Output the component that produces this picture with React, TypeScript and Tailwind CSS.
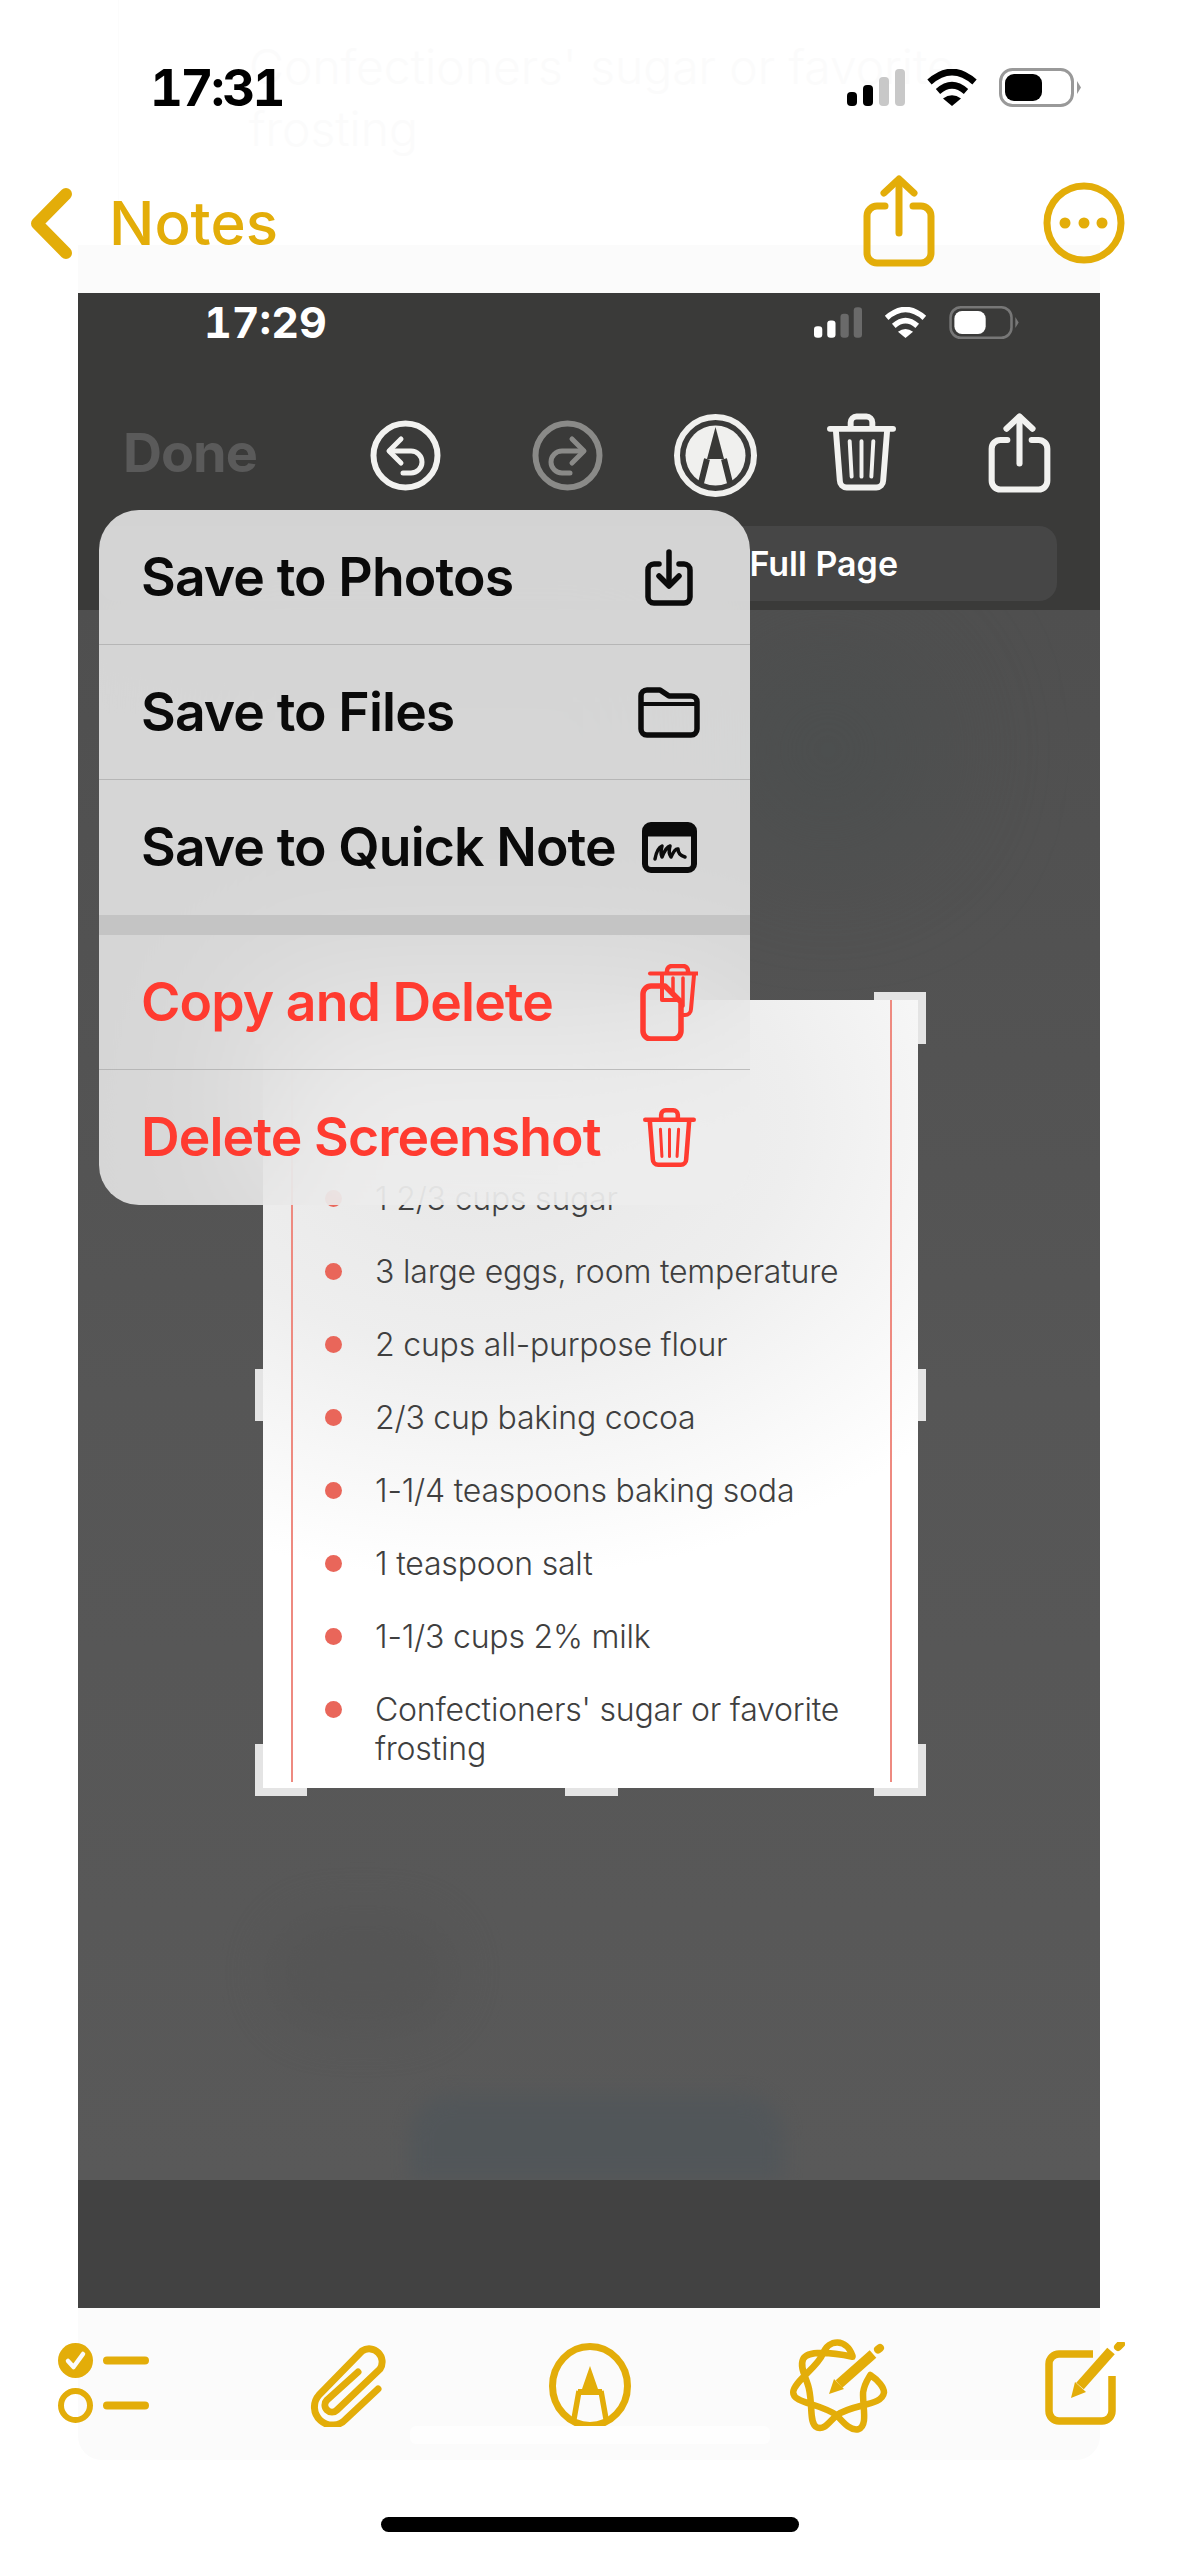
const GOLD = 'text-[#e3ad09]';

function Signal({ className, dim, width, height }: { className: string; dim: string; width: number; height: number }) {
  return (
    <svg width={width} height={height} viewBox="0 0 58 37" className={className}>
      <rect x="0" y="23" width="10" height="14" rx="4" fill="currentColor" />
      <rect x="16" y="16" width="10" height="21" rx="4" fill="currentColor" />
      <rect x="32" y="8" width="10" height="29" rx="4" fill={dim} />
      <rect x="48" y="0" width="10" height="37" rx="4" fill={dim} />
    </svg>
  );
}

function Wifi({ className, width, height }: { className: string; width: number; height: number }) {
  return (
    <svg width={width} height={height} viewBox="0 0 50 37" className={className} fill="none" stroke="currentColor" strokeWidth="6.5">
      <path d="M2.5 13Q25-7 47.500 13" />
      <path d="M11 22.500Q25 10 39 22.500" />
      <path d="M25 37 16 29.500Q25 23 34 29.500Z" fill="currentColor" stroke="none" />
    </svg>
  );
}

function Battery({ className, frame, width, height }: { className: string; frame: string; width: number; height: number }) {
  return (
    <svg width={width} height={height} viewBox="0 0 82 39" className={className}>
      <rect x="1.500" y="1.500" width="72" height="36" rx="12" fill="none" stroke={frame} strokeWidth="3" />
      <rect x="6" y="6" width="37" height="27" rx="9" fill="currentColor" />
      <path d="M78 13 82 19.500 78 26Z" fill={frame} />
    </svg>
  );
}

function ShareIcon({ className, width, height }: { className: string; width: number; height: number }) {
  return (
    <svg width={width} height={height} viewBox="0 0 72 92" className={className} fill="none" stroke="currentColor" strokeWidth="7" strokeLinecap="round" strokeLinejoin="round">
      <path d="M22 31H14A10 10 0 0 0 4 41V78A10 10 0 0 0 14 88H58A10 10 0 0 0 68 78V41A10 10 0 0 0 58 31H50" />
      <path d="M36 58V5" />
      <path d="M21 18 36 4 51 18" />
    </svg>
  );
}

function MoreIcon() {
  return (
    <svg width="82" height="82" viewBox="0 0 82 82" className={GOLD}>
      <circle cx="41" cy="41" r="37" fill="none" stroke="currentColor" strokeWidth="7" />
      <circle cx="22" cy="41" r="5.500" fill="currentColor" />
      <circle cx="41" cy="41" r="5.500" fill="currentColor" />
      <circle cx="59" cy="41" r="5.500" fill="currentColor" />
    </svg>
  );
}

function UndoIcon({ className, flip }: { className: string; flip?: boolean }) {
  return (
    <svg width="71" height="71" viewBox="0 0 71 71" className={className} fill="none" stroke="currentColor" strokeLinecap="round" strokeLinejoin="round">
      <circle cx="35.500" cy="35.500" r="32" strokeWidth="6" />
      <g strokeWidth="5" transform={flip ? 'matrix(-1 0 0 1 71 0)' : undefined}>
        <path d="M20 31H41A11 11 0 0 1 41 53H33" />
        <path d="M31 19 19 31 31 43" />
      </g>
    </svg>
  );
}

function MarkupIcon() {
  return (
    <svg width="83" height="83" viewBox="0 0 83 83" className="text-[#f0f0ee]">
      <circle cx="41.500" cy="41.500" r="38.500" fill="none" stroke="currentColor" strokeWidth="6" />
      <circle cx="41.500" cy="41.500" r="30" fill="currentColor" />
      <path d="M41.500 13 50 45H33Z" fill="#383836" />
      <path d="M33 45 27 69M50 45 56 69" stroke="#383836" strokeWidth="6" fill="none" />
    </svg>
  );
}

function TrashIcon({ className, width, height, bars = 4 }: { className: string; width: number; height: number; bars?: number }) {
  return (
    <svg width={width} height={height} viewBox="0 0 70 78" className={className} fill="none" stroke="currentColor" strokeLinecap="round" strokeLinejoin="round" strokeWidth="6">
      <path d="M24 14V9A6 6 0 0 1 30 3H40A6 6 0 0 1 46 9V14" />
      <path d="M3 15.500H67" />
      <path d="M9 17 13 68A7 7 0 0 0 20 75H50A7 7 0 0 0 57 68L61 17" />
      <path d="M23 28 25 64M35 28V64M47 28 45 64" strokeWidth={bars} />
    </svg>
  );
}

function SavePhotoIcon() {
  return (
    <svg width="48" height="57" viewBox="0 0 48 57" fill="none" stroke="#0b0b0b" strokeWidth="5.500" strokeLinecap="round" strokeLinejoin="round">
      <path d="M14 15H9A6 6 0 0 0 3 21V48A6 6 0 0 0 9 54H39A6 6 0 0 0 45 48V21A6 6 0 0 0 39 15H34" />
      <path d="M24 3V36" />
      <path d="M14 27 24 37 34 27" />
    </svg>
  );
}

function FolderIcon() {
  return (
    <svg width="62" height="51" viewBox="0 0 62 51" fill="none" stroke="#0b0b0b" strokeWidth="5.500" strokeLinejoin="round">
      <path d="M3 9A6 6 0 0 1 9 3H22L31 9H53A6 6 0 0 1 59 15V42A6 6 0 0 1 53 48H9A6 6 0 0 1 3 42Z" />
      <path d="M3 17H59" strokeWidth="4" />
    </svg>
  );
}

function QuickNoteIcon() {
  return (
    <svg width="55" height="51" viewBox="0 0 55 51" fill="none" stroke="#0b0b0b" strokeLinecap="round" strokeLinejoin="round">
      <rect x="3" y="3" width="49" height="45" rx="6" strokeWidth="6" />
      <path d="M3 9A6 6 0 0 1 9 3H46A6 6 0 0 1 52 9V14H3Z" fill="#0b0b0b" strokeWidth="1" />
      <path d="M13 37Q15 26 20 24Q18 31 20 35Q24 25 28 24Q26 31 29 35Q33 26 36 27Q36 33 43 35" strokeWidth="3.500" />
    </svg>
  );
}

function CopyDeleteIcon() {
  return (
    <svg width="58" height="77" viewBox="0 0 58 77" fill="none" stroke="#ff3b30" strokeWidth="5.500" strokeLinecap="round" strokeLinejoin="round">
      <path d="M27 8V7A5 5 0 0 1 32 2H43A5 5 0 0 1 48 7V8" strokeWidth="4.500" />
      <path d="M10 9.500H58" strokeWidth="4" />
      <path d="M54 11 51 45A6 6 0 0 1 45 51H41" strokeWidth="4" />
      <path d="M3 30A8 8 0 0 1 11 22H25L41 38V67A8 8 0 0 1 33 75H11A8 8 0 0 1 3 67Z" />
      <path d="M22 11V36H40" strokeWidth="4" />
      <path d="M33 14V30M43 14V42" strokeWidth="3.500" />
    </svg>
  );
}

function ChecklistIcon() {
  return (
    <svg width="91" height="80" viewBox="0 0 91 80" className={GOLD} fill="none">
      <circle cx="17.500" cy="17.500" r="17.500" fill="currentColor" />
      <path d="M10 18 15.500 24 25 11" stroke="#fbfbfb" strokeWidth="4.500" strokeLinecap="round" strokeLinejoin="round" />
      <circle cx="17.500" cy="62.500" r="14.500" stroke="currentColor" strokeWidth="6" />
      <path d="M49 17.500H87M49 62.500H87" stroke="currentColor" strokeWidth="8" strokeLinecap="round" />
    </svg>
  );
}

function ClipIcon() {
  return (
    <svg width="77" height="86" viewBox="0 0 77 86" className={GOLD} fill="none" stroke="currentColor" strokeWidth="7" strokeLinecap="round" strokeLinejoin="round">
      <path d="M68 48 36 78A18 18 0 0 1 9 54L52 10A13 13 0 0 1 70 28L27 69A7 7 0 0 1 17 59L48 31" />
    </svg>
  );
}

function PenCircleIcon() {
  return (
    <svg width="82" height="86" viewBox="0 0 82 86" className={GOLD} fill="none">
      <ellipse cx="41" cy="43" rx="37.500" ry="39.500" stroke="currentColor" strokeWidth="7" />
      <path d="M41 23 49 46H33Z" fill="currentColor" />
      <path d="M29 46H53V52H29Z" fill="currentColor" />
      <path d="M30 48 25 76M52 48 57 76" stroke="currentColor" strokeWidth="5.500" />
    </svg>
  );
}

function WritingToolsIcon() {
  return (
    <svg width="92" height="94" viewBox="0 0 92 94" className={`overflow-visible ${GOLD}`} fill="none">
      <path
        d="M60.500 17.700C54.500 .3 36.800 .3 30.800 16C24.900 30 1.200 44 1.200 54.400C1.200 65 26.900 65 44.700 77.200C52.600 85.900 58.500 92.900 66.400 91.200C76.300 87.700 70.400 68.400 71.100 54.400C72.300 45.700 76.300 40.500 78.300 37C86.200 42.200 92 49.200 92 54.400C90.100 68.400 62.500 65 44.700 77.200C36.800 84.200 32.800 92.200 24.900 89.400C17 85.900 20.900 68.400 17 51C15 40.500 7.100 30 11.100 21.200C15 12.500 38.700 14.200 60.500 18.800"
        stroke="currentColor"
        strokeWidth="6.500"
        strokeLinecap="round"
        strokeLinejoin="round"
      />
      <path d="M37 56 42 41 52 51Z" fill="currentColor" />
      <path d="M47 46 81 16" stroke="currentColor" strokeWidth="10" />
      <path d="M86 11.500 88 10" stroke="currentColor" strokeWidth="8" strokeLinecap="round" />
    </svg>
  );
}

function ComposeIcon() {
  return (
    <svg width="80" height="83" viewBox="0 0 80 83" className={GOLD} fill="none">
      <path d="M48 12H14A10 10 0 0 0 4 22V69A10 10 0 0 0 14 79H57A10 10 0 0 0 67 69V34" stroke="currentColor" strokeWidth="7.500" />
      <path d="M26 56 30 40 41 50Z" fill="currentColor" />
      <path d="M35 44 66 9" stroke="currentColor" strokeWidth="10" />
      <path d="M73 5 76 2" stroke="currentColor" strokeWidth="8" strokeLinecap="round" />
    </svg>
  );
}

const ingredients = [
  '1 2/3 cups sugar',
  '3 large eggs, room temperature',
  '2 cups all-purpose flour',
  '2/3 cup baking cocoa',
  '1-1/4 teaspoons baking soda',
  '1 teaspoon salt',
  '1-1/3 cups 2% milk',
  "Confectioners' sugar or favorite frosting",
];

function MenuRow({ label, red, icon, line }: { label: string; red?: boolean; icon: React.ReactNode; line?: boolean }) {
  return (
    <div className={`flex h-[135px] items-center justify-between pl-[42px] pr-[46px] ${line ? 'border-b border-[#a9a9a9]/70' : ''}`}>
      <span className={`text-[53.500px] font-[570] tracking-[-0.9px] ${red ? 'text-[#ff3b30]' : 'text-[#0a0a0a]'}`}>{label}</span>
      <span className="flex w-[70px] justify-center">{icon}</span>
    </div>
  );
}

export default function App() {
  return (
    <div className="relative flex h-[2556px] w-[1179px] flex-col overflow-hidden bg-white font-['Inter',sans-serif]">
      {/* faint bleed of the note behind the bars */}
      <div className="absolute left-[118px] right-[79px] top-0 h-[245px] border-l border-[#fcfcfc] pl-[130px] pt-[36px] text-[48px] font-light leading-[62px] text-[#fbfbfb]">
        Confectioners' sugar or favorite<br />frosting
      </div>
      <div className="absolute left-[78px] right-[79px] top-[245px] h-[48px] bg-[#fbfbfb]" />

      <div className="relative flex h-[107px] items-center justify-between pl-[150px] pr-[98px] pt-[68px]">
        <span className="text-[51px] font-bold leading-none tabular-nums tracking-[-2.500px] text-black">17:31</span>
        <div className="flex items-center gap-[22px]">
          <Signal className="text-black" dim="#c8c8c8" width={58} height={37} />
          <Wifi className="text-black" width={50} height={37} />
          <Battery className="text-black" frame="#999999" width={82} height={39} />
        </div>
      </div>

      <div className="relative mt-[68px] flex h-[96px] items-center justify-between pl-[30px] pr-[54px]">
        <div className="flex items-center gap-[36px]">
          <svg width="43" height="73" viewBox="0 0 43 73" fill="none" stroke="currentColor" strokeWidth="12" strokeLinecap="round" strokeLinejoin="round" className={GOLD}>
            <path d="M36 7 7 36.500 36 66" />
          </svg>
          <span className="text-[60px] font-medium leading-none text-[#e3ad09]">Notes</span>
        </div>
        <div className="flex items-center gap-[108px]">
          <ShareIcon className={`-mt-[5px] ${GOLD}`} width={72} height={92} />
          <MoreIcon />
        </div>
      </div>

      <div className="relative ml-[78px] mr-[79px] mt-[22px] flex h-[2015px] flex-col">
        <div className="h-[317px] bg-[#3a3a39]">
          <div className="flex items-center justify-between pl-[126px] pr-[81px] pt-[13px]">
            <span className="text-[43px] font-bold leading-[31px] tabular-nums text-white">17:29</span>
            <div className="flex items-center gap-[20px]">
              <Signal className="text-white" dim="#6a6a6a" width={48} height={31} />
              <Wifi className="text-white" width={47} height={31} />
              <Battery className="text-white" frame="#777777" width={70} height={33} />
            </div>
          </div>
          <div className="mt-[73px] flex h-[87px] items-center pl-[45px]">
            <span className="-mt-[5px] w-[133px] text-[54px] font-bold leading-none tracking-[-1px] text-[#5a5a5a]">Done</span>
            <UndoIcon className="ml-[114px] text-[#f2f2f0]" />
            <UndoIcon className="ml-[91px] text-[#8a8a88]" flip />
            <span className="ml-[71px]"><MarkupIcon /></span>
            <TrashIcon className="ml-[70px] -mt-[8px] text-[#f2f2f0]" width={69} height={78} />
            <ShareIcon className="ml-[92px] -mt-[6px] text-[#f2f2f0]" width={63} height={80} />
          </div>
          <div className="ml-[21px] mr-[43px] mt-[27px] flex h-[75px] items-center justify-end rounded-[18px] bg-[#464646] pr-[159px]">
            <span className="text-[34px] font-semibold text-white">Full Page</span>
          </div>
        </div>

        <div className="relative flex-1 overflow-hidden bg-gradient-to-b from-[#4f4f4f] via-[#565656] to-[#595959]">
          <div className="absolute left-[640px] top-[30px] h-[220px] w-[220px] rounded-full bg-[#4a4e4e] opacity-70 blur-3xl" />
          <div className="absolute bottom-0 left-[332px] h-[85px] w-[374px] rounded-t-[40px] bg-[#50565a] opacity-80 blur-[10px]" />
          <div className="absolute left-[192px] top-[1305px] h-[115px] w-[185px] rounded-full bg-[#525252] opacity-50 blur-xl" />

          <div className="relative ml-[185px] mt-[390px] h-[788px] w-[655px]">
            <span className="absolute -left-[8px] -top-[8px] h-[52px] w-[52px] bg-[#e4e4e4]" />
            <span className="absolute -right-[8px] -top-[8px] h-[52px] w-[52px] bg-[#e4e4e4]" />
            <span className="absolute -bottom-[8px] -left-[8px] h-[52px] w-[52px] bg-[#e4e4e4]" />
            <span className="absolute -bottom-[8px] -right-[8px] h-[52px] w-[52px] bg-[#e4e4e4]" />
            <span className="absolute -left-[8px] top-[369px] h-[52px] w-[16px] bg-[#e4e4e4]" />
            <span className="absolute -right-[8px] top-[369px] h-[52px] w-[16px] bg-[#e4e4e4]" />
            <span className="absolute -bottom-[8px] left-[302px] h-[16px] w-[53px] bg-[#e4e4e4]" />
            <div className="relative h-full bg-[radial-gradient(ellipse_620px_460px_at_220px_120px,#e6e6e6_0%,#eeeeee_50%,#ffffff_100%)] pl-[62px] pt-[179px]">
              <span className="absolute bottom-[6px] left-[28px] top-0 w-[2px] bg-[#ee8a80]" />
              <span className="absolute bottom-[6px] left-[627px] top-0 w-[2px] bg-[#ee8a80]" />
              <ul className="flex flex-col gap-[34px]">
                {ingredients.map((item) => (
                  <li key={item} className="flex items-start gap-[33px]">
                    <span className="mt-[11px] h-[17px] w-[17px] shrink-0 rounded-full bg-[#e9665a]" />
                    <span className="w-[500px] text-[32px] font-light leading-[39px] tracking-[-0.2px] text-[#3f3f3f]">{item}</span>
                  </li>
                ))}
              </ul>
            </div>
          </div>
        </div>

        <div className="h-[128px] bg-[#424242]" />

        <div className="absolute left-[21px] top-[217px] w-[651px] overflow-hidden rounded-[40px] bg-[#ededed]/85 backdrop-blur-[80px]">
          <MenuRow label="Save to Photos" icon={<SavePhotoIcon />} line />
          <MenuRow label="Save to Files" icon={<FolderIcon />} line />
          <MenuRow label="Save to Quick Note" icon={<QuickNoteIcon />} />
          <div className="h-[20px] bg-[#c4c4c4]" />
          <MenuRow label="Copy and Delete" red icon={<CopyDeleteIcon />} line />
          <MenuRow label="Delete Screenshot" red icon={<TrashIcon className="text-[#ff3b30]" width={53} height={61} />} />
        </div>
      </div>

      <div className="relative ml-[78px] mr-[79px] h-[152px] rounded-b-[24px] bg-[#fbfbfb]">
        <div className="-ml-[20px] -mr-[25px] flex items-start justify-between pt-[30px]">
          <span className="mt-[5px]"><ChecklistIcon /></span>
          <span className="mt-[3px]"><ClipIcon /></span>
          <span className="mt-[5px]"><PenCircleIcon /></span>
          <WritingToolsIcon />
          <span className="mt-[4px]"><ComposeIcon /></span>
        </div>
        <span className="absolute bottom-[16px] left-[332px] h-[18px] w-[360px] rounded-[6px] bg-[#fefefe]" />
      </div>

      <div className="mx-auto mt-[57px] h-[15px] w-[418px] rounded-full bg-black" />
    </div>
  );
}
